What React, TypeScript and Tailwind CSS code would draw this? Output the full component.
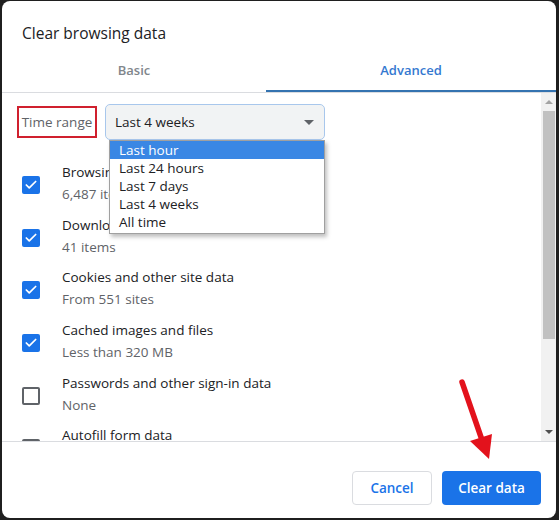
import { Check } from "lucide-react";

const items = [
  { title: "Browsing history", sub: "6,487 items", checked: true },
  { title: "Download history", sub: "41 items", checked: true },
  { title: "Cookies and other site data", sub: "From 551 sites", checked: true },
  { title: "Cached images and files", sub: "Less than 320 MB", checked: true },
  { title: "Passwords and other sign-in data", sub: "None", checked: false },
  { title: "Autofill form data", sub: "", checked: false },
];

const ranges = ["Last hour", "Last 24 hours", "Last 7 days", "Last 4 weeks", "All time"];

function Checkbox({ checked }: { checked: boolean }) {
  if (checked) {
    return (
      <div className="flex h-[18px] w-[18px] shrink-0 items-center justify-center rounded-[2px] bg-[#1a73e8]">
        <Check className="h-[14px] w-[14px] text-white" strokeWidth={3} />
      </div>
    );
  }
  return <div className="h-[18px] w-[18px] shrink-0 rounded-[2px] border-2 border-[#5f6368]" />;
}

function Scrollbar() {
  return (
    <div className="flex w-[15px] shrink-0 flex-col items-center bg-[#f1f1f1]">
      <div className="flex h-[18px] w-full items-center justify-center">
        <div className="h-0 w-0 border-x-[4px] border-b-[4px] border-x-transparent border-b-[#a3a3a3]" />
      </div>
      <div className="h-[228px] w-[12px] bg-[#c1c1c1]" />
      <div className="flex-1" />
      <div className="flex h-[18px] w-full items-center justify-center">
        <div className="h-0 w-0 border-x-[4px] border-t-[4px] border-x-transparent border-t-[#505050]" />
      </div>
    </div>
  );
}

export default function App() {
  return (
    <div
      className="relative h-[520px] w-[559px] bg-[#1f1f1f] pb-[2px] pl-[2px] pr-[3px] pt-[1px]"
      style={{ fontFamily: '"Open Sans", "Noto Sans", sans-serif' }}
    >
      <div className="flex h-full flex-col overflow-hidden rounded-[8px] bg-white">
        <div className="pl-[20px] pt-[20px] text-[15.5px] leading-[24px] text-[#202124]">
          Clear browsing data
        </div>

        <div className="relative mt-[4px] flex h-[44px] border-b border-[#dadce0]">
          <div className="flex w-[264px] items-center justify-center text-[13px] font-semibold text-[#80868b]">
            Basic
          </div>
          <div className="relative flex flex-1 items-center justify-center text-[13px] font-semibold text-[#3478d0]">
            Advanced
            <div className="absolute bottom-0 left-0 right-0 h-[2px] bg-[#3473b0]" />
          </div>
        </div>

        <div className="flex h-[349px] border-b border-[#dadce0]">
          <div className="relative flex-1 overflow-hidden">
            <div className="flex items-center gap-[8px] pl-[15px] pt-[11px]">
              <div className="flex h-[32px] w-[80px] items-center justify-center border-2 border-[#d0202e] text-[13.5px] text-[#5f6368]">
                Time range
              </div>
              <div className="flex h-[36px] w-[220px] items-center justify-between rounded-[5px] border border-[#a8c7ec] bg-[#f1f3f4] pl-[9px] pr-[10px] text-[13.5px] text-[#202124]">
                Last 4 weeks
                <div className="h-0 w-0 border-x-[5px] border-t-[5px] border-x-transparent border-t-[#5f6368]" />
              </div>
            </div>

            <div className="mt-[17px] flex flex-col">
              {items.map((item) => (
                <div key={item.title} className="flex h-[52.6px] shrink-0 items-center gap-[22px] pl-[20px]">
                  <div className="pt-[4px]">
                    <Checkbox checked={item.checked} />
                  </div>
                  <div className="flex flex-col">
                    <div className="h-[22px] text-[13.5px] leading-[22px] text-[#202124]">{item.title}</div>
                    <div className="h-[22px] text-[13.5px] leading-[22px] text-[#5f6368]">{item.sub}</div>
                  </div>
                </div>
              ))}
            </div>

            <div className="absolute left-[107px] top-[47px] w-[216px] border border-[#a0a0a0] bg-white shadow-[2px_3px_4px_rgba(0,0,0,0.25)]">
              {ranges.map((r, i) => (
                <div
                  key={r}
                  className={
                    i === 0
                      ? "h-[18px] bg-[#3a87e4] pl-[9px] text-[13.5px] leading-[18px] text-white"
                      : "h-[18px] pl-[9px] text-[13.5px] leading-[18px] text-[#202124]"
                  }
                >
                  {r}
                </div>
              ))}
              <div className="h-[2px]" />
            </div>
          </div>
          <Scrollbar />
        </div>

        <div className="flex flex-1 items-start justify-end gap-[10px] pr-[15px] pt-[29px]">
          <button className="h-[34px] w-[80px] rounded-[4px] border border-[#dadce0] bg-white text-[13.5px] font-semibold text-[#1a73e8]">
            Cancel
          </button>
          <button className="h-[34px] w-[99px] rounded-[4px] bg-[#1a73e8] text-[13.5px] font-semibold text-white">
            Clear data
          </button>
        </div>
      </div>

      <svg className="pointer-events-none absolute left-0 top-0" width="559" height="520">
        <line x1="462" y1="382" x2="482" y2="440" stroke="#e3121c" strokeWidth="5.5" strokeLinecap="round" />
        <polygon points="470,441 492,434 489,459" fill="#e3121c" />
      </svg>
    </div>
  );
}
